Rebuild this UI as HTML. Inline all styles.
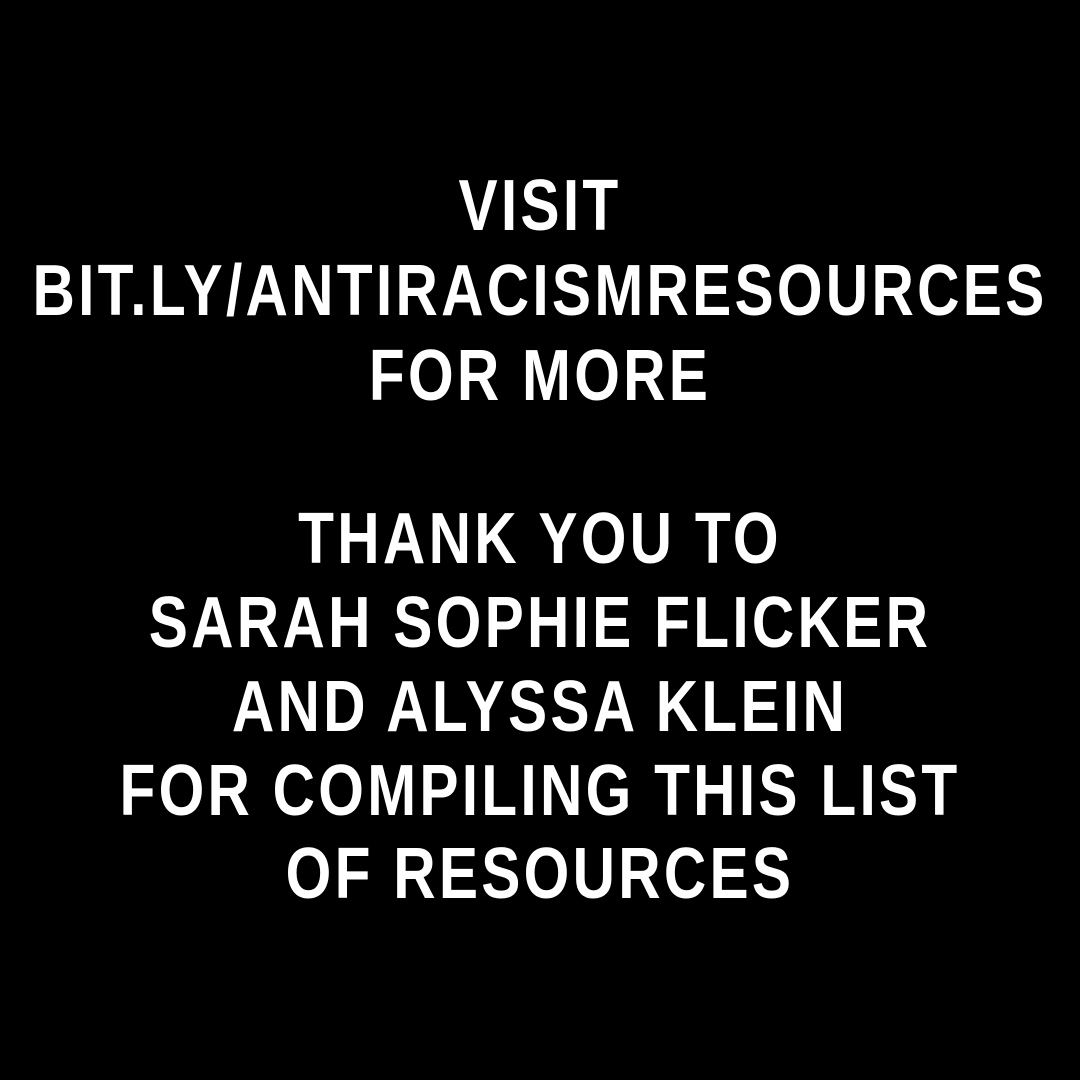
<!DOCTYPE html>
<html><head><style>
html,body{margin:0;padding:0;background:#000;}
body{width:1080px;height:1080px;position:relative;overflow:hidden;}
.l{position:absolute;left:-1000px;width:3080px;text-align:center;color:#fff;font-family:"Liberation Sans",sans-serif;font-weight:bold;font-size:72px;line-height:72px;letter-spacing:4px;transform:scaleX(0.815);transform-origin:1540px 0;white-space:nowrap;}
</style></head><body>
<div class="l" style="top:170px">VISIT</div>
<div class="l" style="top:255px">BIT.LY/ANTIRACISMRESOURCES</div>
<div class="l" style="top:340px">FOR MORE</div>
<div class="l" style="top:503px">THANK YOU TO</div>
<div class="l" style="top:587px">SARAH SOPHIE FLICKER</div>
<div class="l" style="top:671px">AND ALYSSA KLEIN</div>
<div class="l" style="top:755px">FOR COMPILING THIS LIST</div>
<div class="l" style="top:838px">OF RESOURCES</div>
</body></html>
